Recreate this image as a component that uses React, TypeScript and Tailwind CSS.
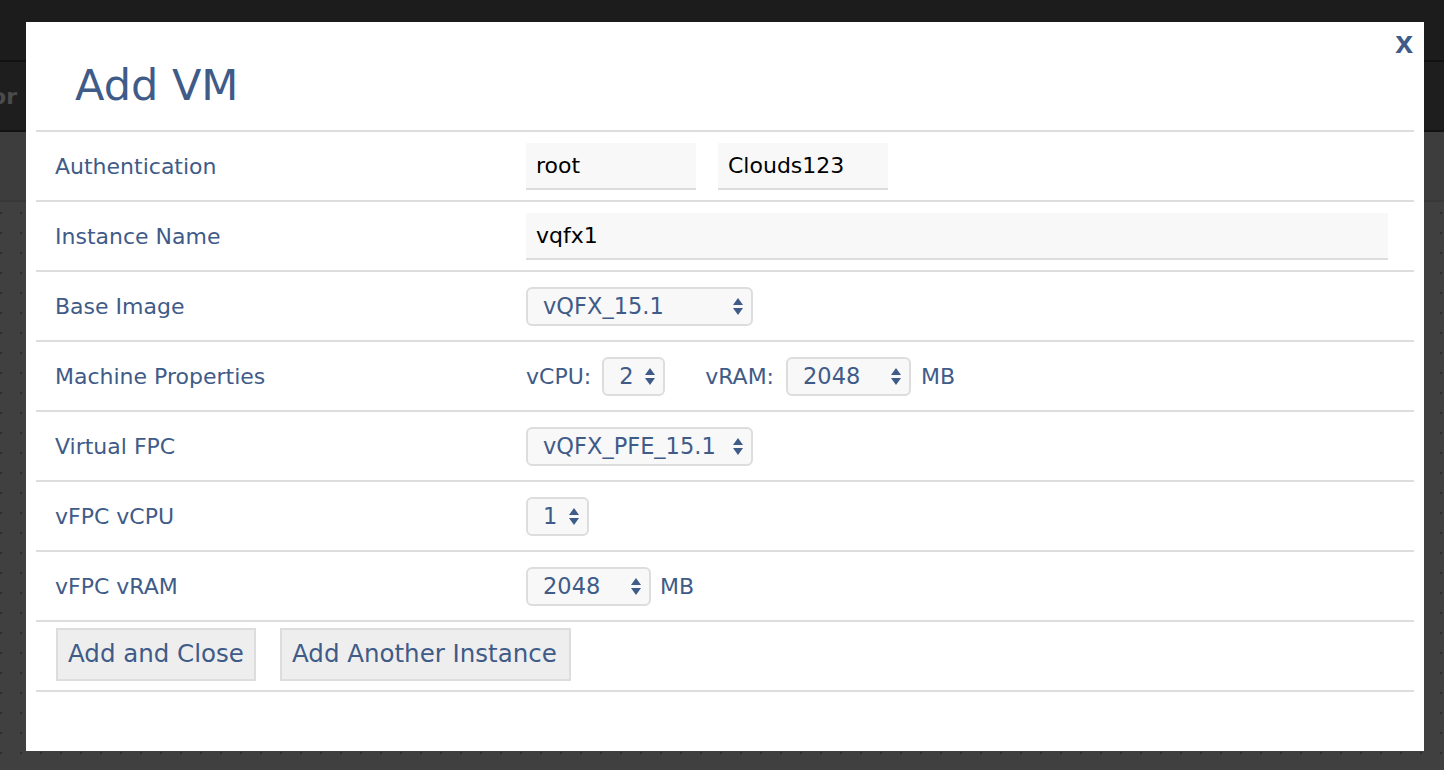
import React from "react";

const LABEL = "text-[#3f5b88]";

function SelectBox({ value, width }: { value: string; width: string }) {
  return (
    <div
      className={`${width} h-[39px] rounded-[6px] border-2 border-[#dddddd] bg-[#f8f8f8] pl-[15px] pr-[8px] flex items-center justify-between ${LABEL} text-[22.5px]`}
    >
      <span className="whitespace-nowrap leading-none">{value}</span>
      <svg width="10" height="17" viewBox="0 0 10 17" className="shrink-0">
        <polygon points="0,7 5,0 10,7" fill="#3f5b88" />
        <polygon points="0,10 5,17 10,10" fill="#3f5b88" />
      </svg>
    </div>
  );
}

function Row({ label, children }: { label?: string; children: React.ReactNode }) {
  return (
    <div className="h-[70px] border-t-2 border-[#dddddd] flex items-center">
      <div className={`w-[490px] pl-[19px] text-[22px] ${LABEL}`}>{label}</div>
      <div className="flex-1 pr-[26px] flex items-center">{children}</div>
    </div>
  );
}

function TextInput({ value, width }: { value: string; width: string }) {
  return (
    <div
      className={`${width} h-[47px] bg-[#f8f8f8] border-b-2 border-[#dddddd] pl-[10px] flex items-center text-[22px] text-black`}
    >
      {value}
    </div>
  );
}

export default function App() {
  return (
    <div className="relative h-[770px] w-full overflow-hidden flex flex-col bg-[#404040] font-['DejaVu_Sans',sans-serif]">
      {/* page behind the dialog */}
      <div className="h-[62px] bg-[#1c1c1c] border-b-2 border-[#111111]" />
      <div className="h-[70px] bg-[#1e1e1e] border-b-2 border-[#131313] flex items-center">
        <div className="w-[17px] flex justify-end whitespace-nowrap text-[22px] font-bold text-[#4b4b4b]">
          Editor
        </div>
      </div>
      <div className="h-[70px] bg-[#3d3d3d] border-b-2 border-[#383838]" />
      <div className="flex-1 bg-[#404040] bg-[image:radial-gradient(circle,#2c2c2c_1px,transparent_1.6px)] bg-[size:20px_20px] bg-[position:11px_1px]" />

      {/* dialog */}
      <div className="absolute left-[26px] top-[22px] w-[1398px] h-[729px] bg-white px-[10px]">
        <button className="absolute top-[4px] right-[11px] font-['Liberation_Sans',sans-serif] font-bold text-[32px] leading-none text-[#3f5b88]">
          x
        </button>
        <div className="h-[108px] pl-[39px] pt-[42px]">
          <h1 className={`text-[43px] leading-none ${LABEL}`}>Add VM</h1>
        </div>

        <div className="border-b-2 border-[#dddddd]">
          <Row label="Authentication">
            <div className="flex gap-[22px]">
              <TextInput value="root" width="w-[170px]" />
              <TextInput value="Clouds123" width="w-[170px]" />
            </div>
          </Row>
          <Row label="Instance Name">
            <TextInput value="vqfx1" width="w-full" />
          </Row>
          <Row label="Base Image">
            <SelectBox value="vQFX_15.1" width="w-[227px]" />
          </Row>
          <Row label="Machine Properties">
            <span className={`text-[22px] ${LABEL} mr-[11px]`}>vCPU:</span>
            <SelectBox value="2" width="w-[63px]" />
            <span className={`text-[22px] ${LABEL} ml-[40px] mr-[12px]`}>vRAM:</span>
            <SelectBox value="2048" width="w-[125px]" />
            <span className={`text-[22px] ${LABEL} ml-[10px]`}>MB</span>
          </Row>
          <Row label="Virtual FPC">
            <SelectBox value="vQFX_PFE_15.1" width="w-[227px]" />
          </Row>
          <Row label="vFPC vCPU">
            <SelectBox value="1" width="w-[63px]" />
          </Row>
          <Row label="vFPC vRAM">
            <SelectBox value="2048" width="w-[125px]" />
            <span className={`text-[22px] ${LABEL} ml-[9px]`}>MB</span>
          </Row>
          <div className="h-[70px] border-t-2 border-[#dddddd] pl-[20px] pt-[6px] flex items-start gap-[24px]">
            <button className={`w-[200px] h-[53px] border-2 border-[#dddddd] bg-[#eeeeee] pl-[10px] text-left text-[24.5px] ${LABEL}`}>
              Add and Close
            </button>
            <button className={`w-[291px] h-[53px] border-2 border-[#dddddd] bg-[#eeeeee] pl-[10px] text-left text-[24.5px] ${LABEL}`}>
              Add Another Instance
            </button>
          </div>
        </div>
      </div>
    </div>
  );
}
